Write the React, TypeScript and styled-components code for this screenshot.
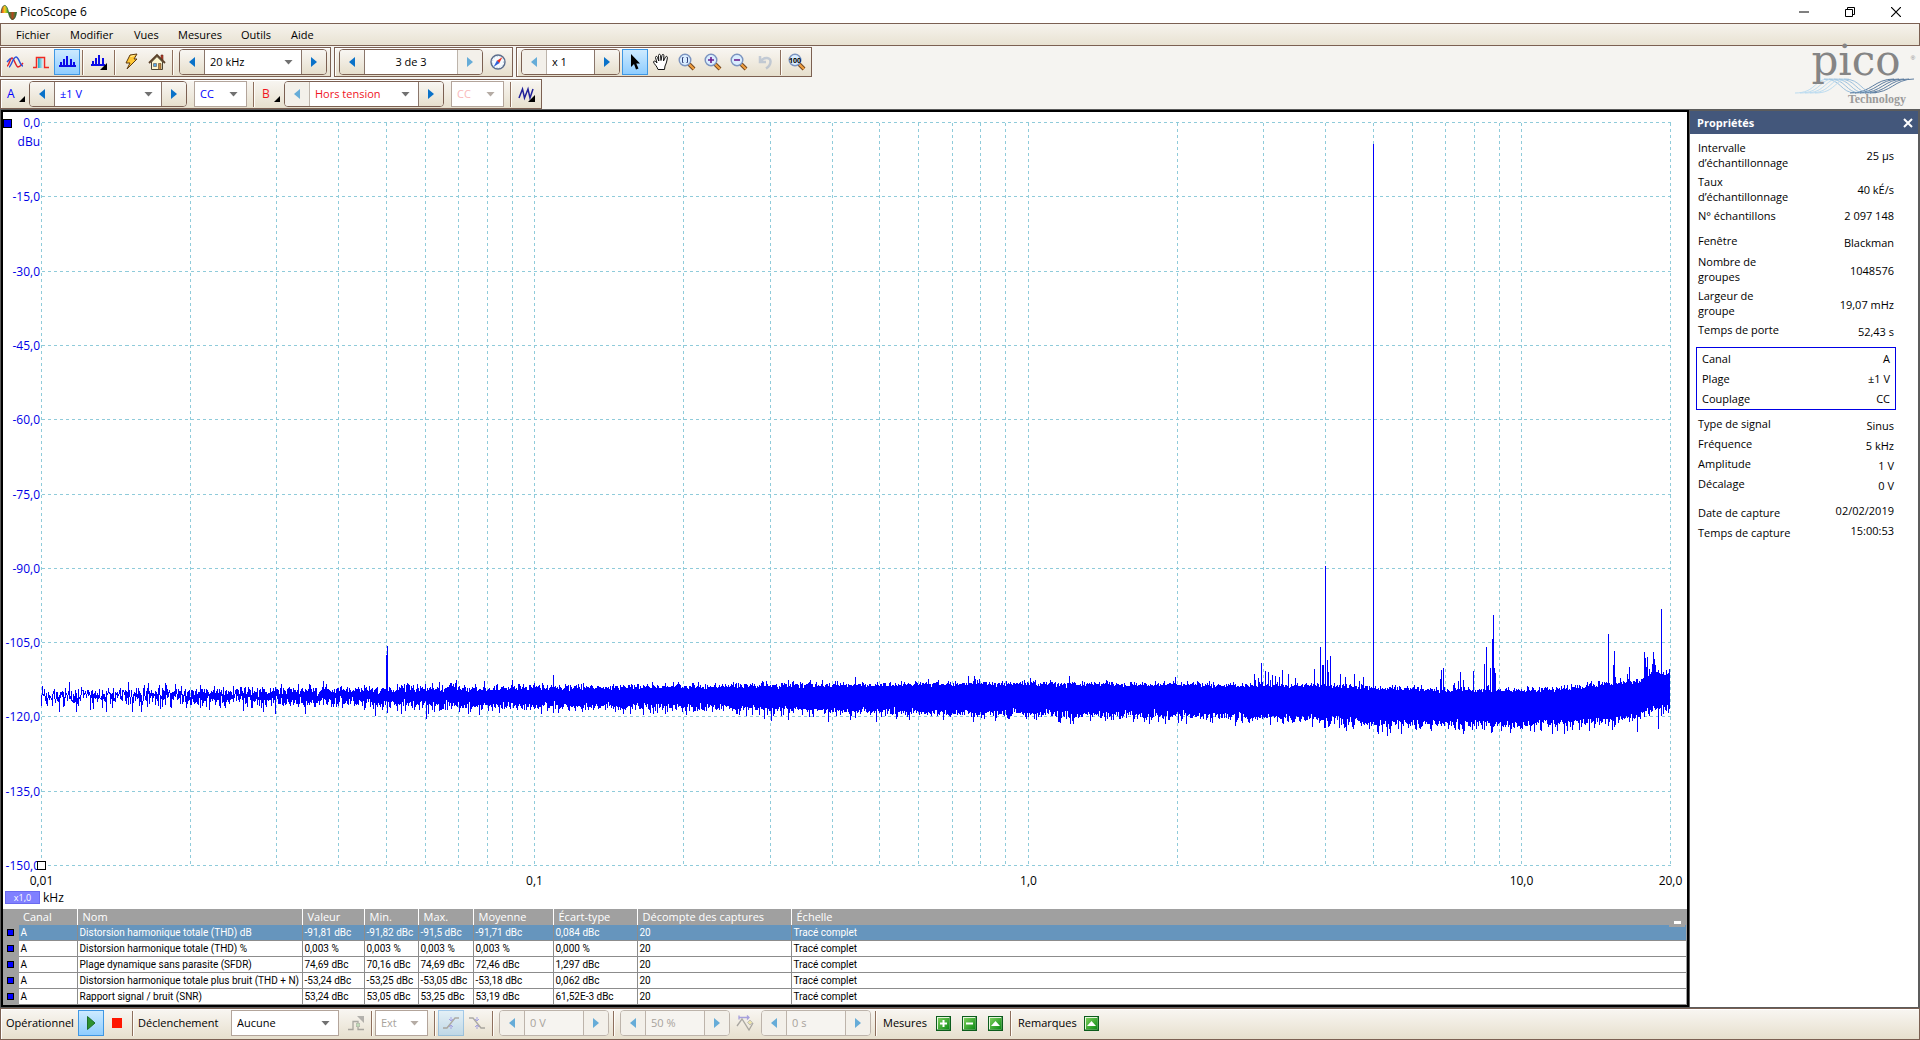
import React, { useEffect, useMemo, useRef, useState } from 'react';
import styled, { createGlobalStyle, css } from 'styled-components';

const GlobalStyle = createGlobalStyle`
  * { box-sizing: border-box; }
  body { margin: 0; background: #f5f4f1; }
  button, input, select { font: inherit; color: inherit; margin: 0; padding: 0; }
`;

const brown = '#7b6052';
const beige = 'linear-gradient(#f8f6f2, #f0ebe0 50%, #e6dfcd)';

/* ---------- window frame ---------- */

const Window = styled.div`
  display: flex;
  flex-direction: column;
  height: 100vh;
  overflow: hidden;
  font: 12px/16px 'Open Sans', 'Noto Sans', sans-serif;
  color: #000;
`;

const TitleBar = styled.header`
  display: flex;
  align-items: center;
  height: 23px;
  flex: none;
  padding-right: 1px;
  background: #fff;
  gap: 3px;
`;

const Title = styled.h1`
  flex: 1;
  margin: 0;
  font: inherit;
`;

const CaptionButton = styled.button`
  width: 46px;
  height: 23px;
  margin-left: -3px;
  border: 0;
  background: none;
  display: grid;
  place-items: center;
`;

const MenuBar = styled.nav`
  display: flex;
  height: 23px;
  flex: none;
  padding-left: 6px;
  border: 1px solid ${brown};
  background: linear-gradient(#f6f3ed, #e8e2d2);
`;

const MenuItem = styled.button<{ $w: number }>`
  width: ${p => p.$w}px;
  padding-left: 9px;
  border: 0;
  background: none;
  text-align: left;
  font-size: 11px;
`;

const ToolArea = styled.div`
  display: flex;
  justify-content: space-between;
  flex: none;
  padding-top: 1px;
  background: #f5f4f1;
`;

const ToolRows = styled.div`
  display: flex;
  flex-direction: column;
  gap: 2px;
`;

const ToolRow = styled.div`
  display: flex;
  gap: 3px;
`;

const barFace = css`
  display: flex;
  align-items: center;
  border: 1px solid ${brown};
  background: ${beige};
  box-shadow: inset 1px 1px 0 #fff;
`;

const ToolGroup = styled.div`
  ${barFace}
  height: 30px;
  padding: 0 1px;
`;

const StatusBar = styled.footer`
  ${barFace}
  height: 32px;
  flex: none;
  padding: 0 1px 2px;
`;

const Separator = styled.span`
  width: 1px;
  height: 25px;
  margin: 0 3px 0 2px;
  background: #8d6f5d;
  box-shadow: 1px 0 0 #fffdf8;
`;

const IconButton = styled.button<{ $on?: boolean }>`
  width: 26px;
  height: 26px;
  display: grid;
  place-items: center;
  border: 1px solid ${p => (p.$on ? '#3f97e3' : 'transparent')};
  background: ${p => (p.$on ? 'linear-gradient(#cdeaff, #8fcdff)' : 'none')};
  &:disabled { opacity: 0.45; }
`;

const ChannelButton = styled.button<{ $color: string }>`
  width: 24px;
  height: 26px;
  padding: 0 1px 0 5px;
  display: flex;
  justify-content: space-between;
  align-items: center;
  border: 0;
  background: none;
  color: ${p => p.$color};
`;

const Corner = styled.i`
  width: 6px;
  height: 6px;
  margin-top: 10px;
  background: #000;
  clip-path: polygon(100% 0, 100% 100%, 0 100%);
`;

const StepFrame = styled.div<{ $w: number; $color?: string; $off?: boolean }>`
  display: flex;
  width: ${p => p.$w}px;
  height: 26px;
  margin: 0 2px 0 3px;
  border: 1px solid ${p => (p.$off ? '#bdb4ab' : brown)};
  border-radius: 4px;
  overflow: hidden;
  color: ${p => (p.$off ? '#a8a39c' : p.$color || '#000')};
  background: ${p => (p.$off ? '#f6f4f0' : '#fff')};
`;

const StepButton = styled.button`
  width: 25px;
  flex: none;
  display: grid;
  place-items: center;
  border: 0 solid #8a766b;
  background: ${beige};
  color: #0a72c9;
  &:first-child { border-right-width: 1px; }
  &:last-child { border-left-width: 1px; }
  &:disabled { border-color: #bdb4ab; background: #f3f0ea; color: #66acd8; }
`;

const StepInput = styled.input<{ $center?: boolean }>`
  flex: 1;
  min-width: 0;
  padding: 0 5px;
  border: 0;
  background: none;
  font-size: 11px;
  text-align: ${p => (p.$center ? 'center' : 'left')};
`;

const SelectFrame = styled.div<{ $w?: number; $color?: string; $off?: boolean; $bare?: boolean; $tight?: boolean }>`
  display: grid;
  align-items: center;
  ${p => (p.$bare ? css`flex: 1; min-width: 0;` : css`
    width: ${p.$w}px;
    height: 26px;
    margin: 0 4px 0 ${p.$tight ? 0 : 5}px;
    border: 1px solid #b3a59b;
  `)}
  background: #fff;
  color: ${p => p.$color || (p.$off ? '#a8a39c' : '#000')};
  > * { grid-area: 1 / 1; }
`;

const Select = styled.select`
  appearance: none;
  width: 100%;
  height: 100%;
  padding-left: 5px;
  border: 0;
  background: none;
  font-size: 11px;
  &:disabled { opacity: 1; }
`;

const Caret = styled.i<{ $off?: boolean }>`
  justify-self: end;
  width: 9px;
  height: 5px;
  margin-right: 8px;
  background: ${p => (p.$off ? '#b5aca5' : '#717171')};
  clip-path: polygon(0 0, 100% 0, 50% 100%);
  pointer-events: none;
`;

const BarLabel = styled.span<{ $w: number; $pad: number }>`
  width: ${p => p.$w}px;
  padding-left: ${p => p.$pad}px;
  white-space: nowrap;
  font-size: 11px;
`;

const Logo = styled.svg`
  width: 126px;
  height: 62px;
  flex: none;
  overflow: visible;
`;

/* ---------- work area ---------- */

const Workspace = styled.main`
  display: flex;
  flex: 1;
  min-height: 0;
  padding: 1px 2px 1px 1px;
  background: #5c5c5c;
`;

const Scope = styled.section`
  display: flex;
  flex-direction: column;
  flex: 1;
  min-width: 0;
  border: 2px solid #000;
  background: #fff;
`;

const PlotArea = styled.div`
  flex: 1;
  min-height: 0;
  overflow: hidden;
  svg { display: block; font-size: 12px; }
`;

const AxisFooter = styled.div`
  display: flex;
  align-items: flex-start;
  flex: none;
  gap: 3px;
  height: 18px;
  padding-left: 2px;
  line-height: 14px;
`;

const ScaleBadge = styled.button`
  width: 35px;
  height: 13px;
  border: 1px solid #6a6af0;
  background: #8080ff;
  color: #fff;
  font-size: 9px;
  line-height: 11px;
`;

const TableWrap = styled.div`
  position: relative;
  flex: none;
  border-right: 1px solid #a0a0a0;
`;

const Table = styled.table`
  width: 100%;
  table-layout: fixed;
  border-collapse: collapse;
  font: 10px/15px Roboto, 'Open Sans', sans-serif;
  white-space: nowrap;
`;

const Head = styled.th`
  height: 16px;
  padding: 0 0 0 5px;
  border-right: 1px solid #fff;
  background: #a0a0a0;
  color: #fff;
  font: 11px/15px 'Open Sans', 'Noto Sans', sans-serif;
  text-align: left;
  &:first-child, &:last-child { border-right: 0; }
`;

const Cell = styled.td`
  height: 16px;
  padding: 0 0 0 2px;
  border-right: 1px solid #8c8c8c;
  border-bottom: 1px solid #8c8c8c;
  &:last-child { border-right: 0; }
`;

const RowHead = styled(Cell)`
  padding: 0 0 0 4px;
  border-color: #a0a0a0;
  background: #a0a0a0;
`;

const Row = styled.tr<{ $selected: boolean }>`
  ${p => p.$selected && css`
    background: #6695bd;
    color: #fff;
  `}
`;

const Swatch = styled.i`
  display: block;
  width: 7px;
  height: 7px;
  border: 1px solid #000;
  background: #00f;
`;

const CollapseButton = styled.button`
  position: absolute;
  top: 10px;
  right: 1px;
  width: 16px;
  height: 8px;
  display: grid;
  place-items: center;
  border: 0;
  background: #a0a0a0;
  &::after { content: ''; width: 7px; height: 3px; background: #fff; }
`;

/* ---------- properties ---------- */

const Panel = styled.aside`
  width: 228px;
  flex: none;
  margin-left: 1px;
  margin-top: 1px;
  background: #fff;
`;

const PanelHead = styled.div`
  display: flex;
  align-items: center;
  justify-content: space-between;
  height: 23px;
  padding: 0 5px 0 7px;
  background: #43577b;
  color: #fff;
`;

const PanelTitle = styled.h2`
  margin: 0;
  font-size: 11px;
  font-weight: 700;
`;

const CloseButton = styled.button`
  display: grid;
  border: 0;
  background: none;
`;

const PropertyList = styled.dl<{ $gap: number; $top: number; $box?: boolean }>`
  display: flex;
  flex-direction: column;
  gap: ${p => p.$gap}px;
  margin: ${p => p.$top}px 24px 0 8px;
  font-size: 11px;
  line-height: 15px;
  ${p => p.$box && css`
    margin-left: 6px;
    margin-right: 22px;
    padding: 3px 5px;
    border: 1px solid #0000e6;
  `}
`;

const Property = styled.div<{ $lower?: boolean; $upper?: boolean }>`
  display: grid;
  grid-template-columns: 100px 1fr;
  align-items: center;
  dt { align-self: start; padding-top: ${p => (p.$upper ? 2 : 0)}px; }
  dd {
    margin: 0;
    text-align: right;
    padding-top: ${p => (p.$lower ? 2 : 0)}px;
    ${p => p.$upper && css`align-self: start;`}
  }
`;

/* ---------- icons ---------- */

const Svg = ({ w = 18, h = 18, children }: { w?: number; h?: number; children: React.ReactNode }) => (
  <svg width={w} height={h} viewBox={`0 0 ${w} ${h}`} fill="none" aria-hidden="true">{children}</svg>
);

const Arrow = ({ left }: { left?: boolean }) => (
  <Svg w={6} h={10}><path d={left ? 'M6 0v10L0 5z' : 'M0 0v10l6-5z'} fill="currentColor" /></Svg>
);

const SineIcon = () => (
  <Svg>
    <path d="M1 13C3 13 4 5 6 5s4 9 6 9 3-2 5-4" stroke="#e0202a" strokeWidth="1.5" />
    <path d="M1 9C3 7 4 5 5 5.500M3 14C5 14 7 4 10 4s4 9 7 9" stroke="#2b53dc" strokeWidth="1.500" />
  </Svg>
);
const PulseIcon = () => (
  <Svg>
    <defs>
      <linearGradient id="pulse"><stop stopColor="#18a8c8" /><stop offset="1" stopColor="#fff" /></linearGradient>
    </defs>
    <rect x="6" y="4" width="6" height="11" fill="url(#pulse)" />
    <path d="M1 14.500h3.500v-10h8v10H17" stroke="#ee2a22" strokeWidth="1.500" />
  </Svg>
);
const SpectrumIcon = () => (
  <Svg><path d="M3 13V9M6 13V6M9 13V3M13 13V6M16 13V9M1 13h17" stroke="#0a0ae8" strokeWidth="2" /></Svg>
);
const SpectrumMenuIcon = () => (
  <Svg>
    <path d="M3 12V8M6 12V5M9 12V2M13 12V5M1 12h14" stroke="#0a0ae8" strokeWidth="2" />
    <path d="M17 10v7h-7z" fill="#000" />
  </Svg>
);
const BoltIcon = () => (
  <Svg>
    <path d="M8 2l7-1-3 5h3L5 16l3-6H4z" fill="#ffc733" stroke="#5c3a10" />
    <path d="M8.500 3.500l4-1" stroke="#fff3b0" />
  </Svg>
);
const HouseIcon = () => (
  <Svg>
    <path d="M13 2h2v5h-2z" fill="#c0392b" stroke="#5a2a18" strokeWidth=".6" />
    <path d="M3.500 9v7.500h11V9L9 3.500z" fill="#fdf6cf" stroke="#4c4433" />
    <path d="M1 10l8-8 8 8" stroke="#5a4028" strokeWidth="1.800" />
    <path d="M5.500 10.500h3v3h-3z" fill="#58a7e6" stroke="#555" strokeWidth=".6" />
    <path d="M10.500 10.500h2.500v6h-2.500z" fill="#c68a3a" stroke="#5a4028" strokeWidth=".6" />
  </Svg>
);
const CompassIcon = () => (
  <Svg>
    <circle cx="9" cy="9" r="7" fill="#f6fbff" stroke="#5b6d8c" strokeWidth="1.400" />
    <circle cx="9" cy="9" r="5.500" stroke="#aac4dd" strokeDasharray="1 2" />
    <path d="M13.500 4L10 10.500 7.500 8z" fill="#f03020" />
    <path d="M4.500 14L8 7.500l2.500 2.500z" fill="#2f62d8" />
  </Svg>
);
const PointerIcon = () => (
  <Svg><path d="M5 1v13l3-3 2 5.500 2.500-1L10.300 10.500H14z" fill="#000" /></Svg>
);
const HandIcon = () => (
  <Svg>
    <path
      d="M6 16.500C5 13 2 11 1.500 9c0-1 1.500-1.500 2.500 0L5 10 3.500 4.500c0-1.500 1.700-1.500 2 0L6.800 8 6.500 2.500c0-1.600 1.900-1.600 2 0L9 7.500l1-5.200c.3-1.400 2-1.200 1.900.3L11.500 8l2-4c.6-1.200 2.200-.6 1.900.7-.5 3.300-1 5.500-2.400 8.300l-.5 3.500z"
      fill="#fff" stroke="#111"
    />
  </Svg>
);
const Lens = ({ children }: { children?: React.ReactNode }) => (
  <Svg>
    <path d="M11 11l5 5" stroke="#70431c" strokeWidth="4" />
    <path d="M11 11l5 5" stroke="#f0a040" strokeWidth="2.200" />
    <circle cx="7" cy="7" r="5.800" fill="#d9edff" stroke="#7b93bf" strokeWidth="1.400" />
    {children}
  </Svg>
);
const UndoIcon = () => (
  <Svg><path d="M4 3v6h6M4.500 8.500C8 3.500 15 4 14.500 9c-.2 3-2 5-4.500 6.500" stroke="#8aa0c2" strokeWidth="2.500" /></Svg>
);
const MathIcon = () => (
  <Svg>
    <path d="M1 13L4.500 4l2 9L10 4l2 9 3-9" stroke="#20209a" strokeWidth="1.500" />
    <path d="M17 10v7h-7z" fill="#000" />
  </Svg>
);
const PlayIcon = () => <Svg><path d="M5.500 2.500v13l7.500-6.500z" fill="#2d9230" stroke="#1d6f2a" /></Svg>;
const StopIcon = () => <Svg><path d="M4 4h10v10H4z" fill="#fe1500" /></Svg>;
const TriggerIcon = () => (
  <Svg>
    <path d="M1 15.500h5v-8h5v8h6" stroke="#555" strokeWidth="1.300" />
    <path d="M10 2h7v7zM9 9h4v4H9z" fill="#666" />
    <path d="M9.500 9.500h3v3h-3z" fill="#8c8" />
  </Svg>
);
const EdgeIcon = ({ falling }: { falling?: boolean }) => (
  <Svg>
    <path d={falling ? 'M1 4h4l8 10h4' : 'M1 14h4l8-10h4'} stroke="#555" strokeWidth="1.300" />
    <path d="M9 3v4M7 5l2 2 2-2M9 15v-4M7 13l2-2 2 2" stroke="#4a4ae0" />
  </Svg>
);
const DelayIcon = () => (
  <Svg>
    <path d="M3 3.500h10M3 1.500v4M11 1.500l2 2-2 2" stroke="#4a40d0" strokeWidth="1.300" />
    <path d="M1 12l5-7 7 11 4-7" stroke="#555" strokeWidth="1.300" />
    <path d="M14 6l2.500 2.500L14 11l-2.500-2.500z" fill="#e4d866" stroke="#888" />
  </Svg>
);
const GreenIcon = ({ kind }: { kind: 'plus' | 'minus' | 'up' }) => (
  <Svg w={15} h={15}>
    <defs>
      <linearGradient id="green" x1="0" y1="0" x2="1" y2="1"><stop stopColor="#7cce5c" /><stop offset="1" stopColor="#0a8a12" /></linearGradient>
    </defs>
    <path d="M0 0h15v15H0z" fill="#0c5c1c" />
    <path d="M1 1h12.500v12.500H1z" fill="#e6f6dc" />
    <path d="M2 2h11.500v11.500H2z" fill="url(#green)" />
    {kind === 'up'
      ? <path d="M3 10l4.500-5L12 10z" fill="#fff" />
      : <path d={kind === 'plus' ? 'M4 7.500h7M7.500 4v7' : 'M4 7.500h7'} stroke="#fff" strokeWidth="2" />}
  </Svg>
);
const AppIcon = () => (
  <Svg w={17} h={18}>
    <defs>
      <linearGradient id="app-up" x1="0" x2="1"><stop stopColor="#e02c20" /><stop offset=".5" stopColor="#f4d020" /><stop offset="1" stopColor="#27a838" /></linearGradient>
      <linearGradient id="app-down" x1="0" x2="1"><stop stopColor="#208838" /><stop offset=".5" stopColor="#b04820" /><stop offset="1" stopColor="#208838" /></linearGradient>
    </defs>
    <path d="M1 10C2 0 7 0 8.500 10z" fill="url(#app-up)" />
    <path d="M8.500 9c1.500 11 7 10 8 0z" fill="url(#app-down)" />
    <path d="M1 10C2 0 7 0 8.500 9.500s7 9 8-.5" stroke="#25502c" strokeWidth=".8" />
  </Svg>
);

/* ---------- controls ---------- */

type StepperProps = {
  label: string; w: number; value: string; options?: boolean; center?: boolean;
  color?: string; off?: boolean; noPrev?: boolean; noNext?: boolean;
};

const Stepper = ({ label, w, value, options, center, color, off, noPrev, noNext }: StepperProps) => (
  <StepFrame $w={w} $color={color} $off={off} role="group" aria-label={label}>
    <StepButton aria-label={`${label} −`} disabled={off || noPrev}><Arrow left /></StepButton>
    {options ? (
      <SelectFrame $bare $color={color}>
        <Select aria-label={label} defaultValue={value}><option>{value}</option></Select>
        <Caret />
      </SelectFrame>
    ) : (
      <StepInput aria-label={label} defaultValue={value} disabled={off} $center={center} />
    )}
    <StepButton aria-label={`${label} +`} disabled={off || noNext}><Arrow /></StepButton>
  </StepFrame>
);

type DropProps = { label: string; w: number; value: string; color?: string; off?: boolean; tight?: boolean };

const Drop = ({ label, w, value, color, off, tight }: DropProps) => (
  <SelectFrame $w={w} $color={color} $off={off} $tight={tight}>
    <Select aria-label={label} defaultValue={value} disabled={off}><option>{value}</option></Select>
    <Caret $off={off} />
  </SelectFrame>
);

const Tool = ({ label, on, off, children }: { label: string; on?: boolean; off?: boolean; children: React.ReactNode }) => (
  <IconButton aria-label={label} $on={on} disabled={off}>{children}</IconButton>
);

/* ---------- spectrum ---------- */

// The trace buffer holds one min/max pair per column on a log frequency axis,
// with levels counted downwards from 0 dBu in steps of 150 / 743 dB.
const COLUMNS = 1629;
const LEVELS = 743;

// [column, usual upper level, usual lower level]
const FLOOR = [
  [0, 562, 588], [700, 562, 589], [987, 561, 592], [1210, 563, 595], [1290, 563, 598],
  [1335, 566, 602], [1440, 568, 603], [1520, 567, 602], [1560, 562, 599],
  [1598, 559, 595], [1606, 551, 589], [1629, 551, 588],
];

// [column, level]
const PEAKS = [
  [87, 560], [124, 561], [282, 559], [345, 533], [346, 524], [471, 558], [512, 553], [814, 555],
  [933, 554], [938, 557], [1134, 555], [1213, 552], [1217, 556], [1220, 541], [1224, 549],
  [1227, 550], [1231, 553], [1234, 554], [1238, 555], [1241, 548], [1247, 552], [1254, 556],
  [1273, 547], [1279, 525], [1281, 543], [1282, 543], [1284, 444], [1286, 538], [1287, 550],
  [1289, 534], [1299, 552], [1304, 555], [1313, 552], [1318, 559], [1322, 555], [1332, 22],
  [1351, 563], [1399, 557], [1400, 548], [1402, 546], [1413, 561], [1417, 559], [1419, 550],
  [1422, 558], [1432, 549], [1443, 542], [1445, 525], [1449, 546], [1451, 517], [1452, 493],
  [1453, 546], [1454, 551], [1567, 512], [1572, 543], [1573, 529], [1574, 555], [1586, 552],
  [1588, 545], [1603, 530], [1604, 536], [1605, 545], [1606, 535], [1608, 547], [1611, 542],
  [1612, 530], [1613, 537], [1614, 543], [1620, 487],
];

// [column, level]
const DIPS = [
  [49, 588], [65, 590], [100, 590], [234, 592], [264, 592], [385, 597], [387, 592], [438, 593],
  [723, 597], [835, 600], [1049, 599], [1208, 601], [1241, 600], [1302, 602], [1312, 607],
  [1423, 609], [1450, 611], [1493, 610], [1523, 610],
];

function makeTrace() {
  let seed = 20190202;
  const random = () => {
    seed = (seed * 1664525 + 1013904223) >>> 0;
    return (seed + 1) / 4294967297;
  };
  const gauss = () => Math.sqrt(-2 * Math.log(random())) * Math.cos(2 * Math.PI * random());
  const peaks = new Map(PEAKS as [number, number][]);
  const dips = new Map(DIPS as [number, number][]);
  const out: [number, number][] = [];
  let k = 0;
  for (let c = 0; c < COLUMNS; c++) {
    while (c > FLOOR[k + 1][0]) k++;
    const [c0, t0, b0] = FLOOR[k];
    const [c1, t1, b1] = FLOOR[k + 1];
    const f = (c - c0) / (c1 - c0);
    const top = t0 + (t1 - t0) * f;
    const bottom = b0 + (b1 - b0) * f;
    const mid = top + 11;
    const n = Math.min(200, Math.round(1.6 * Math.pow(10, c / 440)));
    let hi = -9;
    let lo = 9;
    for (let i = 0; i < n; i++) {
      const z = gauss();
      hi = Math.max(hi, z);
      lo = Math.min(lo, z);
    }
    const place = (z: number) => Math.round(z > 0 ? mid - (z / 2.75) * (mid - top) : mid - (z / 2.75) * (bottom - mid));
    let y0 = place(hi);
    let y1 = place(lo) + 1;
    if (c > 0) {
      const [p0, p1] = out[c - 1];
      if (y0 > p1 && p1 < LEVELS) y0 = p1;
      if (y1 < p0 && !peaks.has(c - 1)) y1 = p0;
    }
    out.push([Math.min(y0, peaks.get(c) ?? 999), Math.max(y1, dips.get(c) ?? 0)]);
  }
  return out;
}

const DB = [0, 15, 30, 45, 60, 75, 90, 105, 120, 135, 150];
const FREQ = [
  ...[1, 2, 3, 4, 5, 6, 7, 8, 9].map(n => n * 0.01),
  ...[1, 2, 3, 4, 5, 6, 7, 8, 9].map(n => n * 0.1),
  1, 2, 3, 4, 5, 6, 7, 8, 9, 10, 20,
];
const FREQ_LABELS: [number, string][] = [[0.01, '0,01'], [0.1, '0,1'], [1, '1,0'], [10, '10,0'], [20, '20,0']];

const MARGIN = { left: 38, top: 10, right: 17, bottom: 26 };

function SpectrumPlot() {
  const ref = useRef<HTMLDivElement>(null);
  const [size, setSize] = useState({ w: 0, h: 0 });
  useEffect(() => {
    const el = ref.current!;
    const measure = () => setSize({ w: el.clientWidth, h: el.clientHeight });
    measure();
    const observer = new ResizeObserver(measure);
    observer.observe(el);
    return () => observer.disconnect();
  }, []);
  const trace = useMemo(makeTrace, []);

  const pw = size.w - MARGIN.left - MARGIN.right;
  const ph = size.h - MARGIN.top - MARGIN.bottom;
  const x = (f: number) => Math.round(MARGIN.left + (pw * Math.log10(f / 0.01)) / Math.log10(2000)) + 0.5;
  const y = (db: number) => Math.round(MARGIN.top + (ph * db) / 150) + 0.5;
  const d = trace
    .map(([a, b], c) => {
      const cx = MARGIN.left + 0.5 + (c * pw) / COLUMNS;
      return `M${cx.toFixed(2)} ${(MARGIN.top + (a * ph) / LEVELS).toFixed(2)}V${(MARGIN.top + (b * ph) / LEVELS).toFixed(2)}`;
    })
    .join('');

  return (
    <PlotArea ref={ref}>
      {size.w > 0 && (
        <svg width={size.w} height={size.h} role="img" aria-label="Spectre, canal A">
          <g stroke="#8fcbda" strokeDasharray="3 3" shapeRendering="crispEdges">
            {DB.map(v => <line key={v} x1={x(0.01)} x2={x(20)} y1={y(v)} y2={y(v)} />)}
            {FREQ.map((v, i) => <line key={i} x1={x(v)} x2={x(v)} y1={y(0)} y2={y(150)} />)}
          </g>
          <path d={d} stroke="#00f" shapeRendering="crispEdges" />
          <g fill="#0000e6" textAnchor="end">
            {DB.map(v => (
              <text key={v} x={37} y={y(v) + 4}>{`${v ? '-' : ''}${v},0`}</text>
            ))}
            <text x={37} y={y(0) + 23}>dBu</text>
          </g>
          <g textAnchor="middle">
            {FREQ_LABELS.map(([f, t]) => <text key={t} x={x(f)} y={y(150) + 19}>{t}</text>)}
          </g>
          <rect x="0.5" y="7.5" width="8" height="8" fill="#00f" stroke="#000" shapeRendering="crispEdges" />
          <rect x={x(0.01) - 4} y={y(150) - 4} width="8" height="8" fill="#fff" stroke="#000" shapeRendering="crispEdges" />
        </svg>
      )}
    </PlotArea>
  );
}

/* ---------- data ---------- */

const MENU: [string, number][] = [['Fichier', 54], ['Modifier', 64], ['Vues', 44], ['Mesures', 63], ['Outils', 50], ['Aide', 44]];

const HEADS = ['Canal', 'Nom', 'Valeur', 'Min.', 'Max.', 'Moyenne', 'Écart-type', 'Décompte des captures', 'Échelle'];
const WIDTHS = [15, 59, 225, 62, 54, 55, 80, 84, 154];
const ROWS = [
  ['A', 'Distorsion harmonique totale (THD) dB', '-91,81 dBc', '-91,82 dBc', '-91,5 dBc', '-91,71 dBc', '0,084 dBc', '20', 'Tracé complet'],
  ['A', 'Distorsion harmonique totale (THD) %', '0,003 %', '0,003 %', '0,003 %', '0,003 %', '0,000 %', '20', 'Tracé complet'],
  ['A', 'Plage dynamique sans parasite (SFDR)', '74,69 dBc', '70,16 dBc', '74,69 dBc', '72,46 dBc', '1,297 dBc', '20', 'Tracé complet'],
  ['A', 'Distorsion harmonique totale plus bruit (THD + N)', '-53,24 dBc', '-53,25 dBc', '-53,05 dBc', '-53,18 dBc', '0,062 dBc', '20', 'Tracé complet'],
  ['A', 'Rapport signal / bruit (SNR)', '53,24 dBc', '53,05 dBc', '53,25 dBc', '53,19 dBc', '61,52E-3 dBc', '20', 'Tracé complet'],
];

type Group = { gap: number; top: number; box?: boolean; lower?: boolean; upper?: boolean; items: [React.ReactNode, string][] };
const GROUPS: Group[] = [
  { gap: 4, top: 6, items: [
    [<>Intervalle<br />d’échantillonnage</>, '25 µs'],
    [<>Taux<br />d’échantillonnage</>, '40 kÉ/s'],
    ['N° échantillons', '2 097 148'],
  ] },
  { gap: 4, top: 10, lower: true, items: [
    ['Fenêtre', 'Blackman'],
    [<>Nombre de<br />groupes</>, '1048576'],
    [<>Largeur de<br />groupe</>, '19,07 mHz'],
    ['Temps de porte', '52,43 s'],
  ] },
  { gap: 5, top: 8, box: true, items: [['Canal', 'A'], ['Plage', '±1 V'], ['Couplage', 'CC']] },
  { gap: 3, top: 6, lower: true, items: [['Type de signal', 'Sinus'], ['Fréquence', '5 kHz'], ['Amplitude', '1 V'], ['Décalage', '0 V']] },
  { gap: 3, top: 10, upper: true, items: [['Date de capture', '02/02/2019'], ['Temps de capture', '15:00:53']] },
];

/* ---------- page ---------- */

export default function App() {
  return (
    <Window>
      <GlobalStyle />
      <TitleBar>
        <AppIcon />
        <Title>PicoScope 6</Title>
        <CaptionButton aria-label="Réduire"><Svg w={10} h={10}><path d="M0 5h10" stroke="#000" /></Svg></CaptionButton>
        <CaptionButton aria-label="Restaurer"><Svg w={10} h={10}><path d="M.5 2.500h7v7h-7zM2.500 2.500v-2h7v7h-2" stroke="#000" /></Svg></CaptionButton>
        <CaptionButton aria-label="Fermer"><Svg w={10} h={10}><path d="M0 0l10 10M10 0L0 10" stroke="#000" strokeWidth="1.200" /></Svg></CaptionButton>
      </TitleBar>
      <MenuBar>
        {MENU.map(([t, w]) => <MenuItem key={t} $w={w}>{t}</MenuItem>)}
      </MenuBar>

      <ToolArea>
        <ToolRows>
          <ToolRow>
            <ToolGroup>
              <Tool label="Mode oscilloscope"><SineIcon /></Tool>
              <Tool label="Mode persistance"><PulseIcon /></Tool>
              <Tool label="Mode spectre" on><SpectrumIcon /></Tool>
              <Separator />
              <Tool label="Options de spectre"><SpectrumMenuIcon /></Tool>
              <Separator />
              <Tool label="Configuration automatique"><BoltIcon /></Tool>
              <Tool label="Accueil"><HouseIcon /></Tool>
              <Separator />
              <Stepper label="Plage de fréquence" w={148} value="20 kHz" options />
            </ToolGroup>
            <ToolGroup>
              <Stepper label="Tampon" w={144} value="3 de 3" center noNext />
              <Tool label="Navigateur"><CompassIcon /></Tool>
            </ToolGroup>
            <ToolGroup>
              <Stepper label="Facteur de zoom" w={99} value="x 1" noPrev />
              <Tool label="Sélection" on><PointerIcon /></Tool>
              <Tool label="Main"><HandIcon /></Tool>
              <Tool label="Zoom sur la sélection"><Lens><path d="M5.500 4.500H4.500v5h1M8.500 4.500h1v5h-1" stroke="#33407a" /></Lens></Tool>
              <Tool label="Zoom avant"><Lens><path d="M4 7h6M7 4v6" stroke="#6b1d8c" strokeWidth="1.600" /></Lens></Tool>
              <Tool label="Zoom arrière"><Lens><path d="M4 7h6" stroke="#6b1d8c" strokeWidth="1.600" /></Lens></Tool>
              <Tool label="Annuler le zoom" off><UndoIcon /></Tool>
              <Separator />
              <Tool label="Zoom 100"><Lens><text x="7" y="10" fontSize="7" fontWeight="700" textAnchor="middle" fill="#000">100</text></Lens></Tool>
            </ToolGroup>
          </ToolRow>
          <ToolRow>
            <ToolGroup>
              <ChannelButton $color="#00f">A<Corner /></ChannelButton>
              <Stepper label="Plage A" w={158} value="±1 V" options color="#00f" />
              <Drop label="Couplage A" w={53} value="CC" color="#00f" />
              <Separator />
              <ChannelButton $color="#f0141e">B<Corner /></ChannelButton>
              <Stepper label="Plage B" w={160} value="Hors tension" options color="#f0141e" noPrev />
              <Drop label="Couplage B" w={53} value="CC" color="#f9b9b9" off />
              <Separator />
              <Tool label="Voies mathématiques"><MathIcon /></Tool>
            </ToolGroup>
          </ToolRow>
        </ToolRows>
        <Logo viewBox="0 0 126 62" role="img" aria-label="pico Technology">
          <g fill="none" strokeWidth="1">
            {[0, 5, 10, 15, 20].map(o => (
              <g key={o}>
                <path d={`M${o + 1} 46C${o + 22} 46 ${o + 20} 32 ${o + 35} 32`} stroke="#bcdcf0" />
                <path d={`M${o + 30} 32C${o + 48} 32 ${o + 46} 46 ${o + 62} 46`} stroke="#9cc0dd" />
                <path d={`M${o + 56} 46C${o + 78} 46 ${o + 80} 32 ${o + 100} 32`} stroke="#5c7c9f" />
              </g>
            ))}
          </g>
          <text x="62" y="28" textAnchor="middle" fontFamily="'DejaVu Serif', serif" fontSize="42" fill="#858585">pico</text>
          <text x="119" y="13" textAnchor="middle" fontFamily="'Liberation Sans', sans-serif" fontSize="6" fill="#858585">®</text>
          <text x="83" y="56" textAnchor="middle" fontFamily="'Liberation Serif', serif" fontWeight="700" fontSize="12" fill="#9b9b9b">Technology</text>
        </Logo>
      </ToolArea>

      <Workspace>
        <Scope>
          <SpectrumPlot />
          <AxisFooter><ScaleBadge>x1,0</ScaleBadge>kHz</AxisFooter>
          <TableWrap>
            <Table>
              <colgroup>
                {WIDTHS.map((w, i) => <col key={i} width={w} />)}
                <col />
              </colgroup>
              <thead>
                <tr>
                  <Head aria-label="Couleur" />
                  {HEADS.map(h => <Head key={h} scope="col">{h}</Head>)}
                </tr>
              </thead>
              <tbody>
                {ROWS.map((r, i) => (
                  <Row key={i} $selected={i === 0}>
                    <RowHead><Swatch /></RowHead>
                    {r.map((t, j) => <Cell key={j}>{t}</Cell>)}
                  </Row>
                ))}
              </tbody>
            </Table>
            <CollapseButton aria-label="Réduire le tableau" />
          </TableWrap>
        </Scope>
        <Panel>
          <PanelHead>
            <PanelTitle>Propriétés</PanelTitle>
            <CloseButton aria-label="Fermer les propriétés"><Svg w={10} h={10}><path d="M1 1l8 8M9 1L1 9" stroke="#fff" strokeWidth="2" /></Svg></CloseButton>
          </PanelHead>
          {GROUPS.map((g, i) => (
            <PropertyList key={i} $gap={g.gap} $top={g.top} $box={g.box}>
              {g.items.map(([k, v], j) => (
                <Property key={j} $lower={g.lower} $upper={g.upper}><dt>{k}</dt><dd>{v}</dd></Property>
              ))}
            </PropertyList>
          ))}
        </Panel>
      </Workspace>

      <StatusBar>
        <BarLabel $w={76} $pad={4}>Opérationnel</BarLabel>
        <Tool label="Démarrer" on><PlayIcon /></Tool>
        <Tool label="Arrêter"><StopIcon /></Tool>
        <Separator />
        <BarLabel $w={95} $pad={2}>Déclenchement</BarLabel>
        <Drop label="Déclenchement" w={108} value="Aucune" tight />
        <Tool label="Déclenchement avancé" off><TriggerIcon /></Tool>
        <Separator />
        <Drop label="Source" w={53} value="Ext" off tight />
        <Separator />
        <Tool label="Front montant" off on><EdgeIcon /></Tool>
        <Tool label="Front descendant" off><EdgeIcon falling /></Tool>
        <Separator />
        <Stepper label="Seuil" w={110} value="0 V" off />
        <Separator />
        <Stepper label="Pré-déclenchement" w={110} value="50 %" off />
        <Tool label="Délai" off><DelayIcon /></Tool>
        <Stepper label="Délai de déclenchement" w={110} value="0 s" off />
        <Separator />
        <BarLabel $w={51} $pad={4}>Mesures</BarLabel>
        <Tool label="Ajouter une mesure"><GreenIcon kind="plus" /></Tool>
        <Tool label="Supprimer une mesure"><GreenIcon kind="minus" /></Tool>
        <Tool label="Modifier une mesure"><GreenIcon kind="up" /></Tool>
        <Separator />
        <BarLabel $w={64} $pad={4}>Remarques</BarLabel>
        <Tool label="Afficher les remarques"><GreenIcon kind="up" /></Tool>
      </StatusBar>
    </Window>
  );
}
